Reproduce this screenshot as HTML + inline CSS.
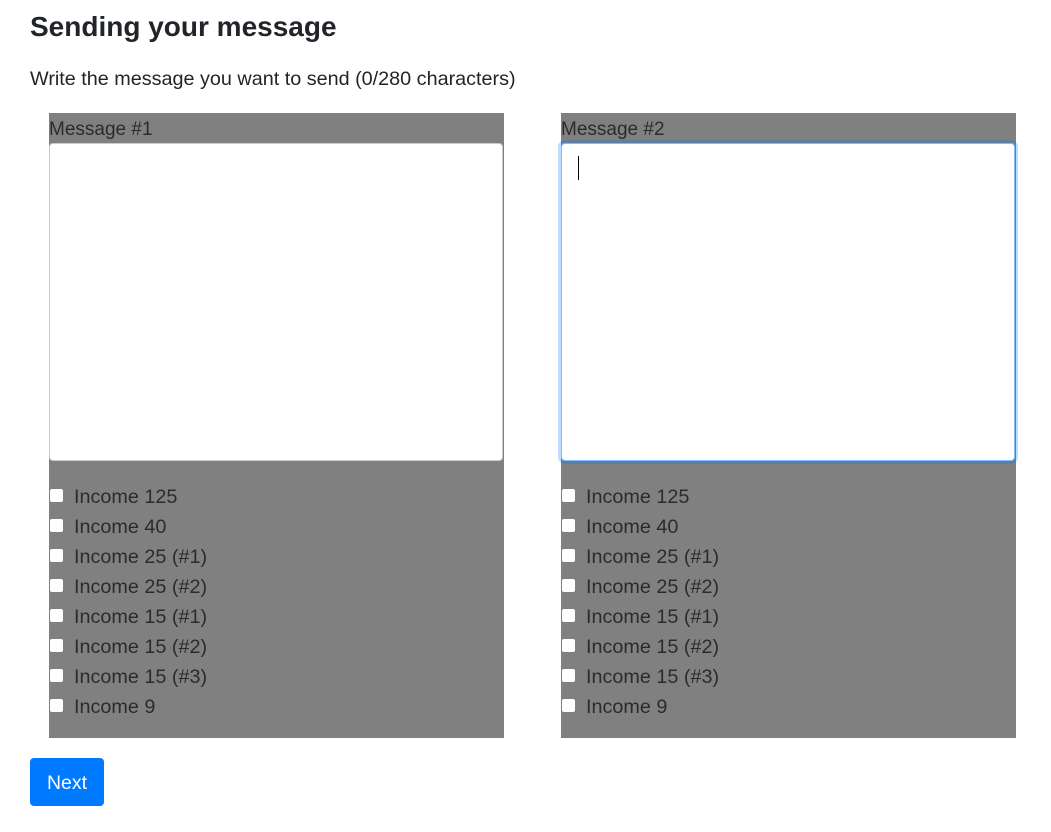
<!DOCTYPE html>
<html><head><style>
body{margin:0;background:#fff;font-family:"Liberation Sans",sans-serif;color:#212529;}
h1{position:absolute;left:30px;top:8px;margin:0;font-size:28px;font-weight:bold;line-height:38px;}
.sub{position:absolute;left:30px;top:66px;font-size:19.8px;line-height:26px;}
.panel{position:absolute;top:113px;width:455px;height:625px;background:#808080;}
.lbl{position:absolute;left:0;top:5px;font-size:19px;line-height:24px;color:#2b2b2b;}
.ta{position:absolute;left:0;top:30px;width:452px;height:316px;background:#fff;border:1px solid #ccc;border-radius:4px;box-sizing:content-box;}
.ta.f{border:1px solid #80bdff;box-shadow:0 0 0 3px rgba(0,123,255,.25);}
.caret{position:absolute;left:16px;top:12px;width:1px;height:24px;background:#000;}
.row{position:absolute;left:0;height:30px;font-size:19.8px;color:#2b2b2b;}
.cb{position:absolute;left:1px;top:4px;width:13px;height:13px;background:#fff;border-radius:2px;}
.row span{position:absolute;left:25px;top:0;white-space:nowrap;line-height:24px;}
.btn{position:absolute;left:30px;top:758px;width:74px;height:48px;background:#007bff;border-radius:4px;color:#fff;font-size:19.5px;line-height:50px;text-align:center;}
</style></head><body>
<h1>Sending your message</h1>
<div class="sub">Write the message you want to send (0/280 characters)</div>
<div class="panel" style="left:49px">
<div class="lbl">Message #1</div>
<div class="ta"></div>
<div class="row" style="top:372px"><div class="cb"></div><span>Income 125</span></div>
<div class="row" style="top:402px"><div class="cb"></div><span>Income 40</span></div>
<div class="row" style="top:432px"><div class="cb"></div><span>Income 25 (#1)</span></div>
<div class="row" style="top:462px"><div class="cb"></div><span>Income 25 (#2)</span></div>
<div class="row" style="top:492px"><div class="cb"></div><span>Income 15 (#1)</span></div>
<div class="row" style="top:522px"><div class="cb"></div><span>Income 15 (#2)</span></div>
<div class="row" style="top:552px"><div class="cb"></div><span>Income 15 (#3)</span></div>
<div class="row" style="top:582px"><div class="cb"></div><span>Income 9</span></div>
</div>
<div class="panel" style="left:561px">
<div class="lbl">Message #2</div>
<div class="ta f"><div class="caret"></div></div>
<div class="row" style="top:372px"><div class="cb"></div><span>Income 125</span></div>
<div class="row" style="top:402px"><div class="cb"></div><span>Income 40</span></div>
<div class="row" style="top:432px"><div class="cb"></div><span>Income 25 (#1)</span></div>
<div class="row" style="top:462px"><div class="cb"></div><span>Income 25 (#2)</span></div>
<div class="row" style="top:492px"><div class="cb"></div><span>Income 15 (#1)</span></div>
<div class="row" style="top:522px"><div class="cb"></div><span>Income 15 (#2)</span></div>
<div class="row" style="top:552px"><div class="cb"></div><span>Income 15 (#3)</span></div>
<div class="row" style="top:582px"><div class="cb"></div><span>Income 9</span></div>
</div>
<div class="btn">Next</div>
</body></html>
